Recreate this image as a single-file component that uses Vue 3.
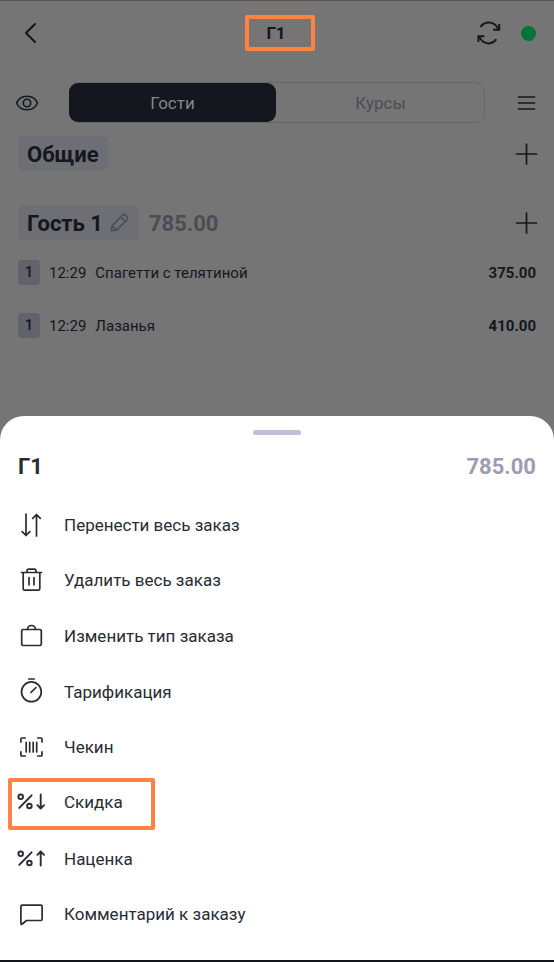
<script setup>
import { ref } from 'vue'

const tab = ref('guests')
const dishes = [
  { count: 1, time: '12:29', name: 'Спагетти с телятиной', price: '375.00' },
  { count: 1, time: '12:29', name: 'Лазанья', price: '410.00' },
]
const actions = [
  { icon: 'move', label: 'Перенести весь заказ' },
  { icon: 'trash', label: 'Удалить весь заказ' },
  { icon: 'bag', label: 'Изменить тип заказа' },
  { icon: 'timer', label: 'Тарификация' },
  { icon: 'scan', label: 'Чекин' },
  { icon: 'down', label: 'Скидка', marked: true },
  { icon: 'up', label: 'Наценка' },
  { icon: 'comment', label: 'Комментарий к заказу' },
]
</script>

<template>
  <div class="page">
    <main class="order">
      <header class="topbar">
        <button class="icon-btn start" aria-label="Назад">
          <svg width="26" height="28" viewBox="0 0 26 28"><path d="M17 5 8 14l9 9" stroke-width="2" /></svg>
        </button>
        <h1 class="title">Г1</h1>
        <div class="status">
          <button class="icon-btn" aria-label="Обновить">
            <svg width="24" height="24" viewBox="0 0 24 24">
              <path d="M3.500 5.800C5.700 3 8.600 1.600 11.800 1.600c4 0 7.400 2.400 9.600 6.500M22.200 3v5.700h-6M19.300 18.200c-2 2.800-4.500 4.200-7.500 4.200-4 0-7.400-2.400-9.600-6.500M1.400 21v-5.700h6" stroke-width="2" stroke-linecap="butt" stroke-linejoin="miter" />
            </svg>
          </button>
          <span class="online"></span>
        </div>
      </header>

      <div class="filters">
        <button class="icon-btn start" aria-label="Показать">
          <svg width="24" height="24" viewBox="0 0 24 24">
            <path d="M1.600 12C3.500 7.500 7.500 5.200 12 5.200S20.500 7.500 22.400 12c-1.900 4.500-5.900 6.800-10.400 6.800S3.500 16.500 1.600 12z" stroke-width="1.600" />
            <circle cx="12" cy="12" r="3.700" stroke-width="1.600" />
          </svg>
        </button>
        <div class="tabs">
          <button :class="{ active: tab === 'guests' }" @click="tab = 'guests'">Гости</button>
          <button :class="{ active: tab === 'courses' }" @click="tab = 'courses'">Курсы</button>
        </div>
        <button class="icon-btn end" aria-label="Меню">
          <svg width="20" height="20" viewBox="0 0 20 20"><path d="M2.500 4h16M2.500 10h16M2.500 16h16" stroke-width="1.700" /></svg>
        </button>
      </div>

      <section class="group">
        <h2 class="chip">Общие</h2>
        <button class="icon-btn end" aria-label="Добавить">
          <svg width="20" height="22" viewBox="0 0 20 22"><path d="M10.500 1v20M.5 11h20" stroke-width="1.700" /></svg>
        </button>
      </section>
      <section class="group guest">
        <h2 class="chip">
          Гость 1
          <svg class="pencil" width="20" height="20" viewBox="0 0 20 20">
            <path d="M1.500 17.800 2 12.800 12.600 2q1.300-1.200 2.600 0l2 2q1.300 1.300 0 2.600L6.700 17.200zM10.800 4l4.500 4.500M2 12.800l4.700 4.400" stroke-width="1.500" />
          </svg>
        </h2>
        <span class="sum">785.00</span>
        <button class="icon-btn end" aria-label="Добавить">
          <svg width="20" height="22" viewBox="0 0 20 22"><path d="M10.500 1v20M.5 11h20" stroke-width="1.700" /></svg>
        </button>
      </section>
      <ul class="dishes">
        <li v-for="dish in dishes" :key="dish.name">
          <span class="count">{{ dish.count }}</span>
          <span class="time">{{ dish.time }}</span>
          <span class="name">{{ dish.name }}</span>
          <strong>{{ dish.price }}</strong>
        </li>
      </ul>
    </main>

    <section class="sheet">
      <div class="handle"></div>
      <div class="sheet-head">
        <h2>Г1</h2>
        <span>785.00</span>
      </div>
      <ul class="actions">
        <li v-for="action in actions" :key="action.icon">
          <button class="action" :class="{ marked: action.marked }">
            <svg width="28" height="28" viewBox="0 0 28 28" stroke-width="1.700">
              <template v-if="action.icon === 'move'">
                <path d="M8 3v21.500M4.200 20.700l3.800 3.800 3.800-3.800M18.500 25V3.500M14.700 7.300l3.800-3.800 3.800 3.800" />
              </template>
              <template v-else-if="action.icon === 'trash'">
                <path d="M3.500 6.500h20M5.200 6.500v16.200q0 1.500 1.500 1.500h13.600q1.500 0 1.500-1.500V6.500M9 6.500V4.800q0-1.600 1.600-1.600h5.800q1.600 0 1.600 1.600v1.700M11 11.500v7.300M16 11.500v7.300" />
              </template>
              <template v-else-if="action.icon === 'bag'">
                <rect x="3.700" y="7.500" width="19.600" height="16" rx="1.300" />
                <path d="M9.500 7.500c.2-2.600 1.900-4 4-4s3.800 1.400 4 4" />
              </template>
              <template v-else-if="action.icon === 'timer'">
                <circle cx="13.400" cy="13.800" r="9.900" />
                <path d="M10.800 1h5.400M13 14.300l5-4.800" />
              </template>
              <template v-else-if="action.icon === 'scan'">
                <path d="M2.900 9V6q0-1 1-1h3.300M19.800 5H23q1 0 1 1v3M24 18.800V22q0 1-1 1h-3.200M7.200 23H3.900q-1 0-1-1v-3.200M8.200 9.300v9.600M11.700 9.300v9.600M15.200 9.300v9.600M18.700 9.300v9.600" />
              </template>
              <template v-else-if="action.icon === 'comment'">
                <path d="M2.900 6.500q0-1.300 1.300-1.300h18.600Q24.100 5.200 24.100 6.500v12.700q0 1.300-1.300 1.300H8.500l-4.300 3.500q-1.300.8-1.300-.7z" />
              </template>
              <template v-else>
                <g stroke-width="1.900">
                  <circle cx="2.700" cy="8.800" r="2.300" />
                  <circle cx="11.400" cy="18" r="2.300" />
                  <path d="M13.600 7.300 1.300 19.900" />
                  <path v-if="action.icon === 'down'" d="M22.700 6.500v14M19.400 17.200l3.300 3.300 3.300-3.300" />
                  <path v-else d="M22.700 20.500v-14M19.400 9.800l3.300-3.300 3.300 3.300" />
                </g>
              </template>
            </svg>
            <span>{{ action.label }}</span>
          </button>
        </li>
      </ul>
    </section>
  </div>
</template>

<style>
body {
  margin: 0;
  background: #757575;
}
</style>

<style scoped>
.page {
  display: flex;
  flex-direction: column;
  box-sizing: border-box;
  min-height: 100vh;
  border-top: 1px solid #555558;
  border-bottom: 2px solid #14151d;
  background: #757575;
  color: #14171d;
  font-family: Roboto, sans-serif;
}
h1, h2, ul {
  margin: 0;
  padding: 0;
}
ul {
  list-style: none;
}
button {
  padding: 0;
  border: 0;
  background: none;
  color: inherit;
  font: inherit;
  cursor: pointer;
}
svg {
  display: block;
  flex: none;
  overflow: visible;
  fill: none;
  stroke: currentColor;
  stroke-linecap: round;
  stroke-linejoin: round;
}
.order {
  padding: 0 18px 64px;
}
.icon-btn {
  display: flex;
}
.topbar {
  display: grid;
  grid-template-columns: 1fr auto 1fr;
  align-items: center;
  height: 64px;
}
.title {
  width: 70px;
  box-sizing: border-box;
  border: 4px solid #ff8443;
  border-radius: 2px;
  margin-left: 6px;
  padding-right: 8px;
  font-size: 17px;
  line-height: 28px;
  font-weight: 700;
  text-align: center;
}
.status {
  display: flex;
  align-items: center;
  justify-content: flex-end;
  gap: 20px;
}
.online {
  width: 15px;
  height: 15px;
  border-radius: 50%;
  background: #00743a;
}
.filters {
  display: grid;
  grid-template-columns: 51px 1fr 51px;
  align-items: center;
  padding-top: 17px;
}
.filters .start {
  margin-left: -3px;
}
.end {
  margin-left: auto;
}
.tabs {
  display: grid;
  grid-template-columns: 1fr 1fr;
  border: 1px solid #66666b;
  border-radius: 10px;
  color: #4c4c55;
}
.tabs button {
  height: 39px;
  border-radius: 9px;
  font-size: 17px;
}
.tabs .active {
  margin: 0 1px 0 -1px;
  background: #14171d;
  color: #85858a;
}
.group {
  display: flex;
  align-items: center;
  gap: 10px;
  margin-top: 13px;
}
.guest {
  margin-top: 34px;
}
.chip {
  display: flex;
  align-items: center;
  gap: 7px;
  padding: 2px 9px 0;
  border-radius: 6px;
  background: #6e6e75;
  font-size: 22px;
  line-height: 33px;
  font-weight: 700;
}
.pencil {
  margin: 0 0 2px;
  color: #4c4c55;
}
.sum {
  padding-top: 2px;
  color: #4c4c55;
  font-size: 22px;
  font-weight: 700;
}
.dishes {
  padding-top: 6px;
}
.dishes li {
  display: flex;
  align-items: center;
  gap: 9px;
  height: 53px;
  font-size: 15px;
}
.count {
  width: 22px;
  border-radius: 4px;
  background: #62626d;
  line-height: 25px;
  font-weight: 500;
  text-align: center;
}
.dishes strong {
  margin-left: auto;
  font-weight: 700;
}
.sheet {
  display: flex;
  flex: 1;
  flex-direction: column;
  padding: 14px 18px 18px;
  border-radius: 24px 24px 0 0;
  background: #fff;
  color: #292c35;
}
.handle {
  align-self: center;
  width: 48px;
  height: 5px;
  border-radius: 3px;
  background: #bfc1db;
}
.sheet-head {
  display: flex;
  align-items: center;
  justify-content: space-between;
  height: 62px;
  font-size: 22px;
  font-weight: 700;
}
.sheet-head h2 {
  font-size: 22px;
}
.sheet-head span {
  color: #9f9bb0;
}
.actions {
  display: grid;
  flex: 1;
  grid-auto-rows: 1fr;
}
.action {
  display: flex;
  align-items: center;
  gap: 18px;
  width: 100%;
  height: 100%;
  font-size: 17px;
  text-align: left;
}
.marked {
  width: 147px;
  box-sizing: border-box;
  height: 52px;
  margin: 3px 0 0 -10px;
  padding: 0 0 4px 6px;
  border: 4px solid #ff8443;
  border-radius: 2px;
}
</style>
